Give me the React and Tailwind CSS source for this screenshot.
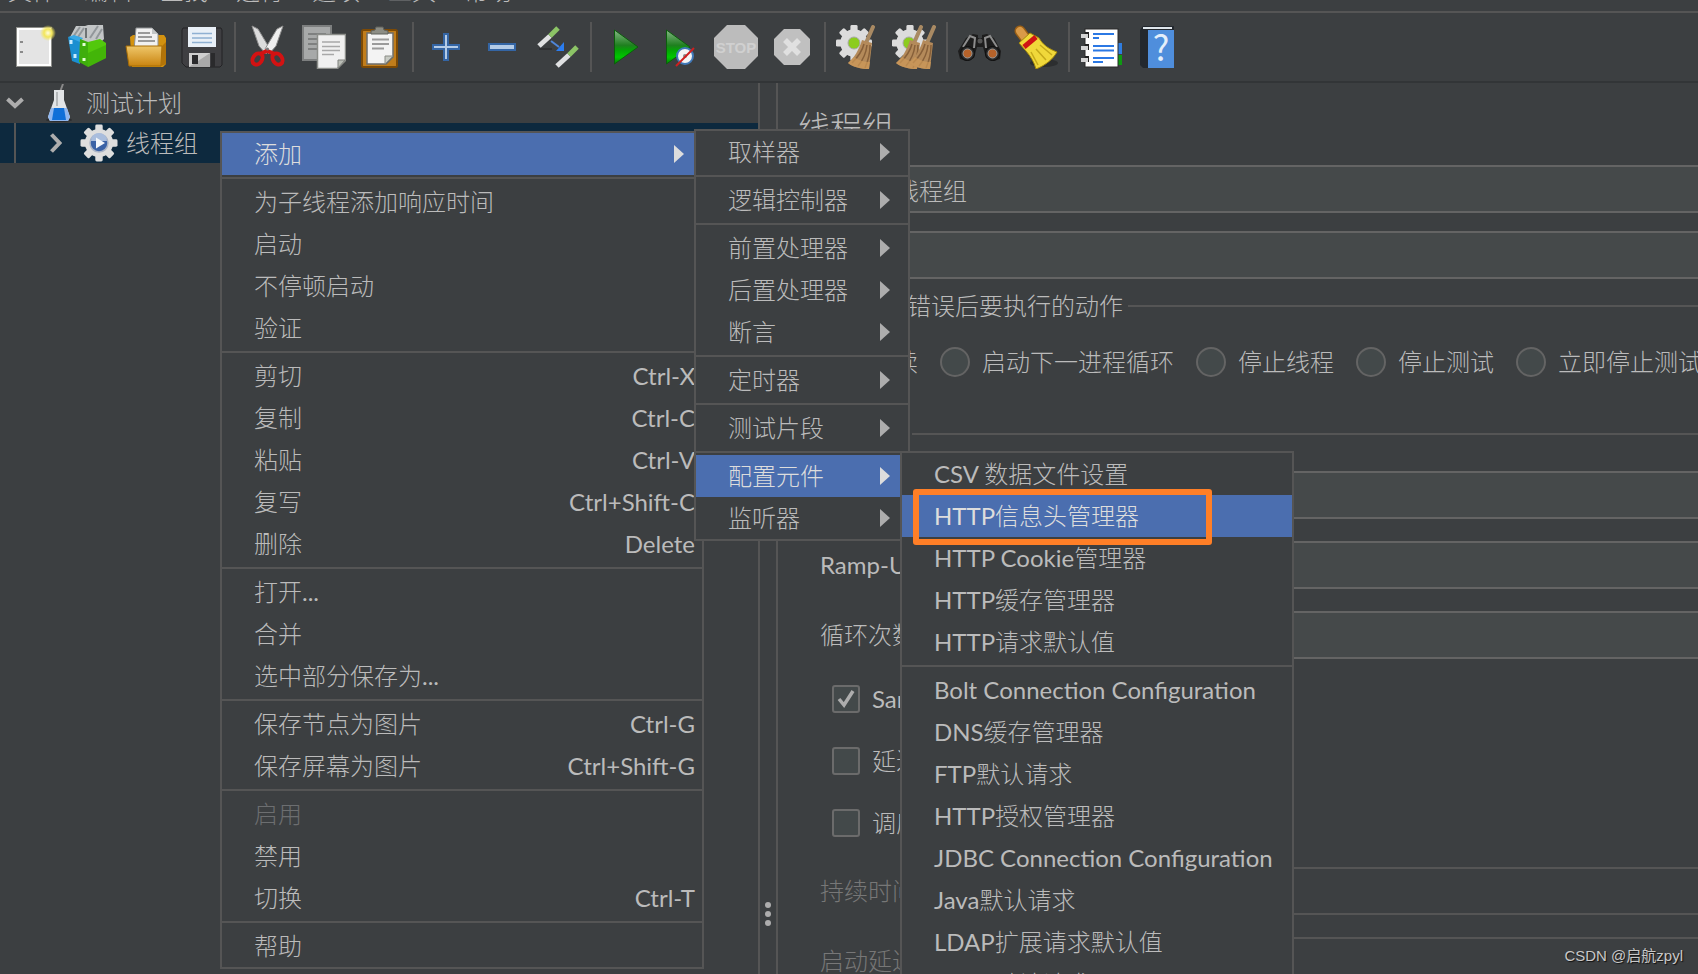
import { useState } from 'react'
import clsx from 'clsx'

const Svg = ({ children }) => (
  <svg viewBox="0 0 44 44" className="size-11" aria-hidden="true">
    {children}
  </svg>
)

const TEETH = [0, 45, 90, 135, 180, 225, 270, 315]

const Gear = ({ cx, cy, r, fill = '#dcdcdc' }) => (
  <g fill={fill}>
    {TEETH.map((angle) => (
      <rect
        key={angle}
        x={cx - r * 0.2}
        y={cy - r}
        width={r * 0.4}
        height={r * 0.5}
        rx={r * 0.08}
        transform={`rotate(${angle} ${cx} ${cy})`}
      />
    ))}
    <circle cx={cx} cy={cy} r={r * 0.76} />
  </g>
)

const NewIcon = () => (
  <Svg>
    <defs>
      <radialGradient id="new-glow">
        <stop offset="0" stopColor="#fffde0" />
        <stop offset="0.5" stopColor="#f3e65a" />
        <stop offset="1" stopColor="#f3e65a" stopOpacity="0" />
      </radialGradient>
    </defs>
    <rect x="4.5" y="2.5" width="35" height="39" fill="#fff" stroke="#8d8e8a" />
    <rect x="7" y="5" width="30" height="34" fill="#e4e4e4" />
    <path d="M8 17h3M8 27h3" stroke="#8a8a8a" strokeWidth="2" />
    <circle cx="36" cy="8" r="8" fill="url(#new-glow)" />
  </Svg>
)

const TemplatesIcon = () => (
  <Svg>
    <path d="M2 12 8 1h9l3-1h15l1 14-6 6-22-2z" fill="#c3c6c7" />
    <path
      d="M5 12l7-10M10 12l6-9M22 13l8-12M28 14l6-10"
      stroke="#92979a"
      strokeWidth="2"
    />
    <path d="M18 3v10" stroke="#6e7375" strokeWidth="2" />
    <path d="M0 12 12 15v24L4 36z" fill="#1a8fd1" />
    <path d="M0 12l6-2 9 3-3 4z" fill="#3aa9e6" />
    <path d="M3 15v4M7 29v4" stroke="#c9ecff" strokeWidth="3" />
    <path d="M12 14 20 17v25l-9-5z" fill="#3fae0c" />
    <path d="M20 17 32 14l6 4v15l-18 9z" fill="#52c80c" />
    <path d="M20 42V28l18-8v13z" fill="#3aa806" opacity="0.6" />
    <path d="M16 18v3M16 33v3" stroke="#e3ffd2" strokeWidth="3" />
  </Svg>
)

const OpenIcon = () => (
  <Svg>
    <defs>
      <linearGradient id="open-front" x1="0" y1="0" x2="0" y2="1">
        <stop offset="0" stopColor="#efc76a" />
        <stop offset="1" stopColor="#c98410" />
      </linearGradient>
    </defs>
    <path d="M6 12 9 10h31l2 3v26l-3 3H8z" fill="#d3920f" />
    <path d="M12 3h16l6 6v16H10z" fill="#f1f1f1" stroke="#8f9294" />
    <path d="M14 8h12M14 12h14M14 16h17" stroke="#9a9a9a" strokeWidth="2" />
    <path d="M28 3v6h6z" fill="#c2c5c6" />
    <path d="M2 21h36l-1 20H5z" fill="url(#open-front)" stroke="#a66c06" />
    <path d="M38 21l4-4v22l-5 2z" fill="#b37408" />
  </Svg>
)

const SaveIcon = () => (
  <Svg>
    <path d="M3 3h38l1 2v35l-2 2H6l-4-4V5z" fill="#3f3f42" stroke="#232325" />
    <rect x="8" y="2" width="28" height="20" fill="#e9f0f7" />
    <path d="M12 8.5h20M12 13h20M12 17.500h20" stroke="#8fb0d2" strokeWidth="1.5" />
    <rect x="9" y="28" width="21" height="14" fill="#cfcfcf" />
    <path d="M9 42h21V28z" fill="#a9a9a9" />
    <rect x="12" y="30" width="6" height="9" fill="#2a2a2c" />
    <rect x="31" y="28" width="4" height="14" fill="#2a2a2c" />
  </Svg>
)

const CutIcon = () => (
  <Svg>
    <path d="M6 1l6 3 12 20-4 5-7-8z" fill="#dcdcdc" stroke="#8e8e8e" />
    <path d="M37 1l-6 3-12 20 4 5 7-8z" fill="#efefef" stroke="#8e8e8e" />
    <g fill="none" stroke="#d31212" strokeWidth="4">
      <ellipse cx="11.5" cy="34" rx="4.5" ry="6" transform="rotate(35 11.5 34)" />
      <ellipse cx="31.5" cy="34" rx="4.5" ry="6" transform="rotate(-35 31.5 34)" />
      <path d="M14 29l7-3 8 3" />
    </g>
    <circle cx="21.5" cy="24" r="1.5" fill="#777" />
  </Svg>
)

const CopyIcon = () => (
  <Svg>
    <rect x="1" y="1" width="28" height="34" fill="#a7a9a9" stroke="#7d7f7f" strokeWidth="2" />
    <path d="M6 9h18M6 14h9M6 19h9M6 24h9" stroke="#7e8080" strokeWidth="2" />
    <path d="M15.5 9.5h28v26l-8 8h-20z" fill="#f0f0f0" stroke="#8c8e8a" strokeWidth="1.5" />
    <path d="M20 17h18M20 21.500h18M20 25.500h18M20 29.500h12" stroke="#a8a8a8" strokeWidth="1.5" />
    <path d="M43 35h-7v8z" fill="#babdb6" stroke="#7f817d" />
  </Svg>
)

const PasteIcon = () => (
  <Svg>
    <rect x="4" y="5" width="35" height="37" rx="1.5" fill="#c17d1b" stroke="#7d4a05" strokeWidth="2" />
    <path d="M9 8h26v24l-7 7H9z" fill="#f3f3f3" stroke="#6d6e6b" strokeWidth="1.5" />
    <path d="M14 14.500h17M14 19h17M14 23.500h12" stroke="#9b9b9b" strokeWidth="2" />
    <path d="M35 31h-8v8z" fill="#c7cac3" stroke="#8a8c86" />
    <path d="M13 9V6l4-1 1-3h7l1 3 4 1v3z" fill="#8c8d85" stroke="#5f605a" />
  </Svg>
)

const PlusIcon = () => (
  <Svg>
    <path
      d="M20 9h4v11h11v4H24v11h-4V24H9v-4h11z"
      fill="#b4cbe6"
      stroke="#3465a4"
      strokeWidth="2"
    />
  </Svg>
)

const MinusIcon = () => (
  <Svg>
    <rect x="9" y="19" width="26" height="6" fill="#b4cbe6" stroke="#3465a4" strokeWidth="2" />
  </Svg>
)

const ToggleIcon = () => (
  <Svg>
    <g strokeWidth="5">
      <path d="M3 21 14 11" stroke="#e0e1e2" />
      <path d="M14 11l8-8" stroke="#8cc466" />
      <path d="M21 41 33 30" stroke="#e0e1e2" />
      <path d="M33 30l8-8" stroke="#8cc466" />
    </g>
    <path d="M3 24h13" stroke="#2b2d2e" strokeWidth="1.5" />
    <path d="M15 16l8 6" stroke="#4f86d9" strokeWidth="2" />
    <path d="M20 26h8v-9z" fill="#2b7df0" />
  </Svg>
)

const PlayGradient = ({ id }) => (
  <defs>
    <linearGradient id={id} x1="0" y1="0" x2="0" y2="1">
      <stop offset="0" stopColor="#86b886" />
      <stop offset="0.45" stopColor="#1f7f1f" />
      <stop offset="0.6" stopColor="#04a504" />
      <stop offset="0.8" stopColor="#00c800" />
      <stop offset="1" stopColor="#057a05" />
    </linearGradient>
  </defs>
)

const StartIcon = () => (
  <Svg>
    <PlayGradient id="play-a" />
    <path d="M12.5 5 36 22 12.5 39z" fill="url(#play-a)" stroke="#0c5d0c" />
  </Svg>
)

const StartNoTimersIcon = () => (
  <Svg>
    <PlayGradient id="play-b" />
    <path d="M8.5 5 32 22 8.5 39z" fill="url(#play-b)" stroke="#0c5d0c" />
    <circle cx="27" cy="31" r="8" fill="#f4f4f4" stroke="#3f78b8" strokeWidth="2" />
    <circle cx="27" cy="31" r="2" fill="#8a8a8a" />
    <path d="M18 41 36 23" stroke="#cf1f1f" strokeWidth="2" />
  </Svg>
)

const StopIcon = () => (
  <Svg>
    <path d="M13 0h18l13 13v18L31 44H13L0 31V13z" fill="#bcbcbc" />
    <text
      x="22"
      y="28"
      textAnchor="middle"
      fontFamily="Liberation Sans"
      fontWeight="700"
      fontSize="15"
      fill="#d0d0d0"
    >
      STOP
    </text>
  </Svg>
)

const ShutdownIcon = () => (
  <Svg>
    <path d="M14 4h16l10 10v16L30 40H14L4 30V14z" fill="#c0c0c0" />
    <path d="M15 15l14 14M29 15 15 29" stroke="#e0e0e0" strokeWidth="5.5" />
  </Svg>
)

const Broom = ({ x = 0 }) => (
  <g transform={`translate(${x} 0)`}>
    <path d="M37 2 30 18" stroke="#a98a63" strokeWidth="4" strokeLinecap="round" />
    <path d="M26 15l10 3-3 26c-8 0-16-2-21-6 6-5 11-13 14-23z" fill="#b48a5a" />
    <path
      d="M28 19c-2 8-7 14-12 19M31 20c-1 9-4 15-9 21M34 20c0 9-2 16-5 23"
      fill="none"
      stroke="#87603a"
      strokeWidth="1.5"
    />
    <path d="M12 38c5 4 13 6 21 6l1-7c-6 0-12-2-16-5z" fill="#cf9a58" opacity="0.7" />
  </g>
)

const ClearIcon = () => (
  <Svg>
    <Gear cx={18} cy={18} r={18} />
    <circle cx="18" cy="18" r="6" fill="#8ccc1e" stroke="#a8a8a8" />
    <Broom />
  </Svg>
)

const ClearAllIcon = () => (
  <Svg>
    <Gear cx={18} cy={18} r={18} />
    <circle cx="17" cy="18" r="6" fill="#8ccc1e" stroke="#a8a8a8" />
    <Broom x={-8} />
    <Broom x={5} />
  </Svg>
)

const SearchIcon = () => (
  <Svg>
    <path d="M15 9l5 1v3h4v-3l5-1 7 4 7 13-1 8-6 2-8-3-3-11h-6l-3 11-8 3-6-2-2-8 8-13z" fill="#1d1d1d" />
    <path d="M5 22l7-11 5 2-1 10M39 22l-7-11-5 2 1 10" fill="none" stroke="#8d8d8d" strokeWidth="2" />
    <circle cx="9.5" cy="28.5" r="7" fill="#2b2b2b" stroke="#0d0d0d" />
    <circle cx="34.5" cy="28.5" r="7" fill="#2b2b2b" stroke="#0d0d0d" />
    <circle cx="9.5" cy="28.5" r="4.5" fill="#b5622a" stroke="#999" />
    <circle cx="34.5" cy="28.5" r="4.5" fill="#b5622a" stroke="#999" />
    <circle cx="22" cy="16" r="2.5" fill="#555" />
  </Svg>
)

const ResetSearchIcon = () => (
  <Svg>
    <ellipse cx="30" cy="38" rx="14" ry="4" fill="#2c2e2f" />
    <path d="M6 6 12 14" stroke="#9a5f16" strokeWidth="11" strokeLinecap="round" />
    <path d="M6 6 12 14" stroke="#d99a48" strokeWidth="8" strokeLinecap="round" />
    <path d="M5 18 16 8l9 5c4 7 10 11 18 14-4 7-11 13-21 17-2-7-5-12-10-18z" fill="#f0d83a" stroke="#a58a0c" />
    <path d="M17 27l7 13M22 24l10 11M26 20l12 10" stroke="#c5a91a" strokeWidth="1.5" />
    <path d="M10 22 22 12" stroke="#cf1414" strokeWidth="5" />
  </Svg>
)

const FunctionIcon = () => (
  <Svg>
    <rect x="36" y="18" width="6" height="11" fill="#2f7de0" />
    <rect x="36" y="30" width="6" height="10" fill="#0f9a12" />
    <rect x="5" y="4" width="33" height="38" fill="#fff" stroke="#2b2b2b" />
    <path d="M13 9h21M13 21h21M13 25.500h21M13 33h21" stroke="#2b78e4" strokeWidth="2" />
    <path d="M13 13h6M13 37h10" stroke="#2b78e4" strokeWidth="2" />
    <path d="M7 7v6M7 19v6M7 31v6" stroke="#222" strokeWidth="4" />
    <path d="M1 11h7M1 23h7M1 35h7" stroke="#d4d4d4" strokeWidth="4" />
  </Svg>
)

const HelpIcon = () => (
  <Svg>
    <path d="M4 5 7 1h31v42H7l-3-3z" fill="#23282e" />
    <path d="M7 3h29" stroke="#dfe6ec" strokeWidth="2" />
    <rect x="12" y="5" width="26" height="38" fill="#4f8edc" />
    <text
      x="25"
      y="36"
      textAnchor="middle"
      fontFamily="Noto Sans CJK SC"
      fontWeight="400"
      fontSize="35"
      fill="#e4eefa"
    >
      ?
    </text>
  </Svg>
)

const TOOLBAR = [
  [
    ['新建', NewIcon],
    ['模板', TemplatesIcon],
    ['打开', OpenIcon],
    ['保存', SaveIcon],
  ],
  [
    ['剪切', CutIcon],
    ['复制', CopyIcon],
    ['粘贴', PasteIcon],
  ],
  [
    ['展开', PlusIcon],
    ['折叠', MinusIcon],
    ['切换', ToggleIcon],
  ],
  [
    ['启动', StartIcon],
    ['不停顿启动', StartNoTimersIcon],
    ['停止', StopIcon],
    ['关闭', ShutdownIcon],
  ],
  [
    ['清除', ClearIcon],
    ['清除全部', ClearAllIcon],
  ],
  [
    ['查找', SearchIcon],
    ['重置搜索', ResetSearchIcon],
  ],
  [
    ['函数助手', FunctionIcon],
    ['帮助', HelpIcon],
  ],
]

const MENU_BAR = ['文件', '编辑', '查找', '运行', '选项', '工具', '帮助']

const CONTEXT_MENU = [
  [{ label: '添加', sub: true, active: true }],
  [
    { label: '为子线程添加响应时间' },
    { label: '启动' },
    { label: '不停顿启动' },
    { label: '验证' },
  ],
  [
    { label: '剪切', keys: 'Ctrl-X' },
    { label: '复制', keys: 'Ctrl-C' },
    { label: '粘贴', keys: 'Ctrl-V' },
    { label: '复写', keys: 'Ctrl+Shift-C' },
    { label: '删除', keys: 'Delete' },
  ],
  [{ label: '打开...' }, { label: '合并' }, { label: '选中部分保存为...' }],
  [
    { label: '保存节点为图片', keys: 'Ctrl-G' },
    { label: '保存屏幕为图片', keys: 'Ctrl+Shift-G' },
  ],
  [
    { label: '启用', disabled: true },
    { label: '禁用' },
    { label: '切换', keys: 'Ctrl-T' },
  ],
  [{ label: '帮助' }],
]

const ADD_MENU = [
  [{ label: '取样器', sub: true }],
  [{ label: '逻辑控制器', sub: true }],
  [
    { label: '前置处理器', sub: true },
    { label: '后置处理器', sub: true },
    { label: '断言', sub: true },
  ],
  [{ label: '定时器', sub: true }],
  [{ label: '测试片段', sub: true }],
  [
    { label: '配置元件', sub: true, active: true },
    { label: '监听器', sub: true },
  ],
]

const CONFIG_MENU = [
  [
    { label: 'CSV 数据文件设置' },
    { label: 'HTTP信息头管理器', active: true },
    { label: 'HTTP Cookie管理器' },
    { label: 'HTTP缓存管理器' },
    { label: 'HTTP请求默认值' },
  ],
  [
    { label: 'Bolt Connection Configuration' },
    { label: 'DNS缓存管理器' },
    { label: 'FTP默认请求' },
    { label: 'HTTP授权管理器' },
    { label: 'JDBC Connection Configuration' },
    { label: 'Java默认请求' },
    { label: 'LDAP扩展请求默认值' },
    { label: 'LDAP默认请求' },
  ],
]

const MenuItem = ({ item }) => (
  <button
    type="button"
    role="menuitem"
    disabled={item.disabled}
    className={clsx(
      'flex h-[42px] w-full items-center justify-between pl-8 text-left whitespace-nowrap',
      item.sub ? 'pr-[18px]' : 'pr-[7px]',
      item.active && 'bg-[#4b6eaf] text-[#dddddd]',
      item.disabled && 'text-[#6c6e70]'
    )}
  >
    <span>{item.label}</span>
    {item.keys && <span>{item.keys}</span>}
    {item.sub && (
      <svg viewBox="0 0 10 18" className="h-[18px] w-[10px]" aria-hidden="true">
        <path d="M0 0 10 9 0 18z" fill={item.active ? '#dddddd' : '#adadad'} />
      </svg>
    )}
  </button>
)

const Menu = ({ groups, className }) => (
  <div
    role="menu"
    className={clsx('absolute border-2 border-[#555555] bg-[#3c3f41]', className)}
  >
    {groups.map((group, index) => (
      <div key={index}>
        {index > 0 && <hr className="my-0.5 border-t-2 border-[#555555]" />}
        {group.map((item) => (
          <MenuItem key={item.label} item={item} />
        ))}
      </div>
    ))}
  </div>
)

const Toolbar = () => (
  <div className="flex h-[70px] shrink-0 items-center border-b-2 border-[#323537] pl-1.5">
    {TOOLBAR.map((group, index) => (
      <div key={index} className="flex items-center">
        {index > 0 && <div className="mx-1 h-[50px] w-0.5 bg-[#555555]" />}
        {group.map(([label, Icon]) => (
          <button
            key={label}
            type="button"
            aria-label={label}
            className="flex w-14 items-center justify-center"
          >
            <Icon />
          </button>
        ))}
      </div>
    ))}
  </div>
)

const FlaskIcon = () => (
  <svg viewBox="0 0 26 38" className="h-[38px] w-[26px]" aria-hidden="true">
    <ellipse cx="13" cy="36" rx="13" ry="2" fill="#2c2e30" />
    <path d="M14 8 17 0" stroke="#8a8a8a" strokeWidth="2" />
    <path d="M8 6h10v10l6 17-2 4H4l-2-4 6-17z" fill="#e2e4e6" />
    <path d="M5 24h16l3 9-2 4H4l-2-4z" fill="#8fb6ee" />
    <path d="M8 24h10l2 12H6z" fill="#0f6fd8" />
    <path d="M11 8v14" stroke="#b5b8ba" strokeWidth="2" />
  </svg>
)

const ThreadGroupIcon = () => (
  <svg viewBox="0 0 38 38" className="size-[38px]" aria-hidden="true">
    <Gear cx={19} cy={19} r={18.5} fill="#dedede" />
    <circle cx="19" cy="19" r="9" fill="#3a62a6" stroke="#aab4c6" strokeWidth="1.5" />
    <path d="M11 17a8 8 0 0 1 16 0z" fill="#a9bddd" />
    <path d="M16 13.500 25 19l-9 5.500z" fill="#f3f6fa" />
  </svg>
)

const TestTree = () => (
  <aside className="w-[760px] shrink-0 border-r-2 border-[#555555]">
    <div className="flex h-10 items-center pl-1.5">
      <svg viewBox="0 0 18 12" className="mr-[22px] h-3 w-[18px]" aria-hidden="true">
        <path d="M1.500 2 9 9l7.500-7" fill="none" stroke="#adadad" strokeWidth="4" />
      </svg>
      <FlaskIcon />
      <span className="ml-3.5">测试计划</span>
    </div>
    <div className="flex h-10 items-center bg-[#0d293e] pl-3.5">
      <div className="mr-[34px] h-full w-0.5 bg-[#555555]" />
      <svg viewBox="0 0 12 20" className="mr-[18px] h-5 w-3" aria-hidden="true">
        <path d="M1.500 1.500 9.500 10l-8 8.500" fill="none" stroke="#adadad" strokeWidth="4" />
      </svg>
      <ThreadGroupIcon />
      <span className="ml-2">线程组</span>
    </div>
  </aside>
)

const Divider = () => (
  <div className="flex w-4 shrink-0 flex-col items-center justify-end gap-[3px] pb-12">
    <div className="size-1.5 rounded-full bg-[#adadad]" />
    <div className="size-1.5 rounded-full bg-[#adadad]" />
    <div className="size-1.5 rounded-full bg-[#adadad]" />
  </div>
)

const SectionTitle = ({ children }) => (
  <div className="flex h-8 items-center gap-[5px] pl-5">
    <div className="h-0.5 w-2 bg-[#555555]" />
    <h2 className="shrink-0">{children}</h2>
    <div className="h-0.5 flex-1 bg-[#555555]" />
  </div>
)

const Field = ({ id, label, value = '', disabled, className, labelClassName }) => (
  <div className={clsx('flex h-12 items-center', className)}>
    <label
      htmlFor={id}
      className={clsx('shrink-0 whitespace-nowrap', labelClassName, disabled && 'text-[#777777]')}
    >
      {label}
    </label>
    <input
      id={id}
      type="text"
      defaultValue={value}
      disabled={disabled}
      className={clsx(
        'h-full min-w-0 flex-1 border-y-2 border-l-2 px-2 outline-none',
        disabled ? 'border-[#555555]' : 'border-[#646464] bg-[#45494a]'
      )}
    />
  </div>
)

const CheckBox = ({ label, defaultChecked = false }) => {
  const [checked, setChecked] = useState(defaultChecked)

  return (
    <label className="flex h-7 items-center gap-3 whitespace-nowrap">
      <span className="relative size-7 shrink-0">
        <input
          type="checkbox"
          checked={checked}
          onChange={(event) => setChecked(event.target.checked)}
          className="block size-7 appearance-none rounded-[3px] border-2 border-[#6b6b6b] bg-[#43494a]"
        />
        {checked && (
          <svg
            viewBox="0 0 28 28"
            className="pointer-events-none absolute inset-0 size-7"
            aria-hidden="true"
          >
            <path d="M7 14l5 6 9-14" fill="none" stroke="#adadad" strokeWidth="3.5" />
          </svg>
        )}
      </span>
      {label}
    </label>
  )
}

const ERROR_ACTIONS = ['继续', '启动下一进程循环', '停止线程', '停止测试', '立即停止测试']

const ThreadGroupPanel = () => {
  const [action, setAction] = useState('继续')

  return (
    <main className="min-w-0 flex-1 overflow-hidden border-l-2 border-[#555555] pt-6">
      <h1 className="pl-5 text-[32px] leading-10">线程组</h1>

      <div className="mt-[18px] flex flex-col gap-[18px] pl-[22px]">
        <Field id="name" label="名称：" value="线程组" labelClassName="w-[85px]" />
        <Field id="comments" label="注释：" labelClassName="w-[85px]" />
      </div>

      <div className="mt-[11px]">
        <SectionTitle>在取样器错误后要执行的动作</SectionTitle>
        <div className="mt-[25px] flex gap-[22px] pl-[50px] whitespace-nowrap">
          {ERROR_ACTIONS.map((name) => (
            <label key={name} className="flex h-[30px] shrink-0 items-center gap-3">
              <input
                type="radio"
                name="error-action"
                checked={action === name}
                onChange={() => setAction(name)}
                className="size-[30px] appearance-none rounded-full border-2 border-[#646464] bg-[#43494a] checked:border-[#adadad]"
              />
              {name}
            </label>
          ))}
        </div>
      </div>

      <div className="mt-[41px]">
        <SectionTitle>线程属性</SectionTitle>
        <div className="mt-[21px] flex flex-col gap-[22px] pl-[42px]">
          <Field id="threads" label="线程数：" value="1" labelClassName="w-60" />
          <Field id="ramp-up" label="Ramp-Up时间（秒）：" value="1" labelClassName="w-60" />
          <Field id="loops" label="循环次数" value="1" labelClassName="w-60" />
        </div>
        <div className="mt-[26px] flex flex-col gap-[34px] pl-[54px]">
          <CheckBox label="Same user on each iteration" defaultChecked />
          <CheckBox label="延迟创建线程直到需要" />
          <CheckBox label="调度器" />
        </div>
        <div className="mt-[30px] flex flex-col gap-[22px] pl-[42px]">
          <Field id="duration" label="持续时间（秒）" disabled labelClassName="w-60" />
          <Field id="delay" label="启动延迟（秒）" disabled labelClassName="w-60" />
        </div>
      </div>
    </main>
  )
}

const App = () => (
  <div className="relative flex h-screen flex-col overflow-hidden bg-[#3c3f41] font-['Lato','Noto_Sans_CJK_SC_Light','Noto_Sans_CJK_SC',sans-serif] text-2xl text-[#bbbbbb]">
    <nav className="flex h-[13px] shrink-0 items-end gap-7 overflow-hidden border-b-2 border-[#555555] px-2">
      {MENU_BAR.map((name) => (
        <button key={name} type="button" className="leading-10">
          {name}
        </button>
      ))}
    </nav>
    <Toolbar />
    <div className="flex min-h-0 flex-1">
      <TestTree />
      <Divider />
      <ThreadGroupPanel />
    </div>

    <Menu groups={CONTEXT_MENU} className="top-[131px] left-[220px] w-[484px]" />
    <Menu groups={ADD_MENU} className="top-[129px] left-[694px] w-[216px]" />
    <Menu groups={CONFIG_MENU} className="top-[451px] left-[900px] w-[394px]" />

    <div className="pointer-events-none absolute top-[489px] left-[913px] h-14 w-[299px] rounded-[3px] border-6 border-[#ff7f27]" />

    <div className="pointer-events-none absolute right-[15px] bottom-1.5 font-['Liberation_Sans','Noto_Sans_CJK_SC',sans-serif] text-[15px] leading-6 text-[#c8c8c8] [text-shadow:1px_1px_1px_#111]">
      CSDN @启航zpyl
    </div>
  </div>
)

export default App
